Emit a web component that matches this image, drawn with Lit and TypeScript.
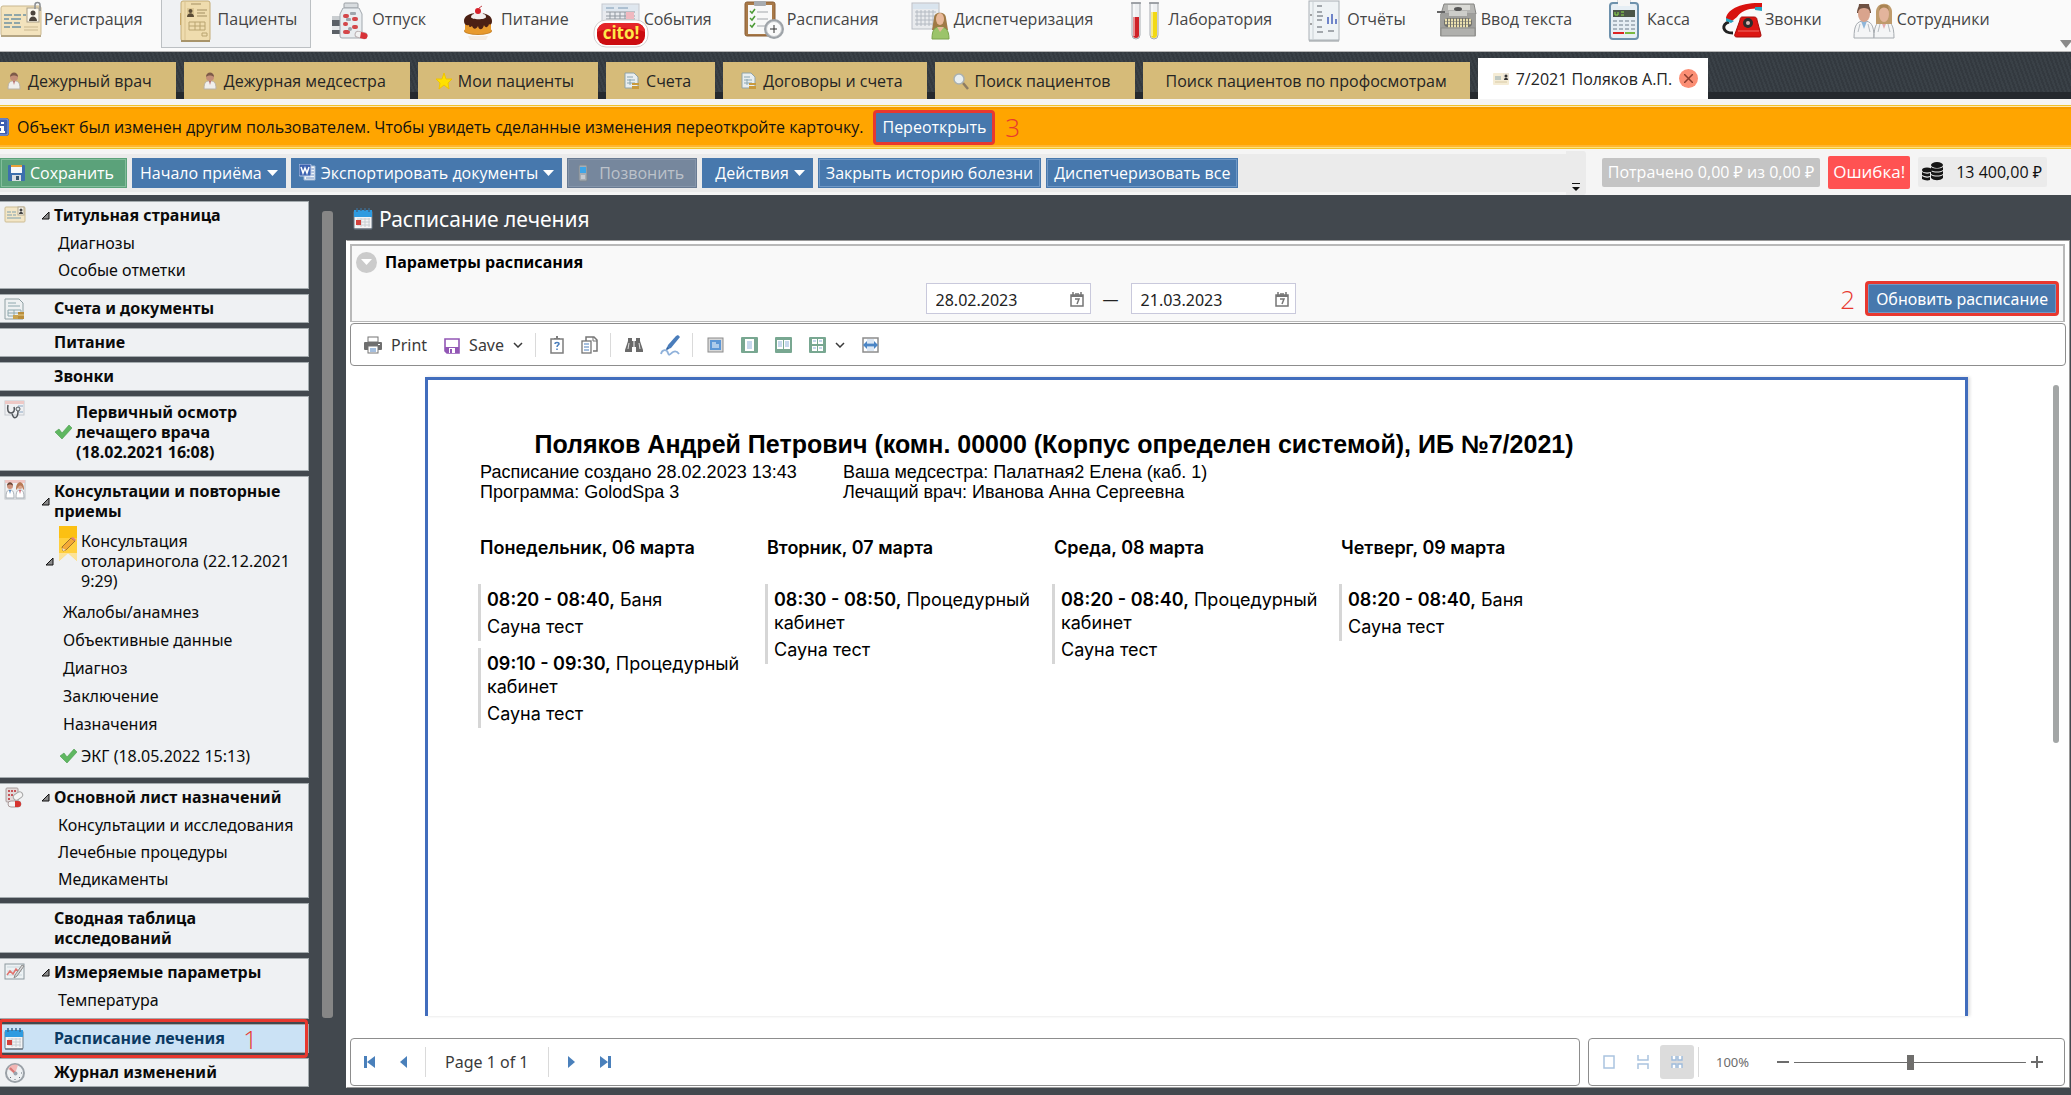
import { LitElement, html, css, svg, nothing, TemplateResult } from "lit";
import { customElement, state } from "lit/decorators.js";
import { classMap } from "lit/directives/class-map.js";

type Glyph = { w: number; h: number; body: TemplateResult };
const glyph = (w: number, h: number, body: TemplateResult): Glyph => ({ w, h, body });

const ICONS: Record<string, Glyph> = {
  card: glyph(44, 44, svg`
    <rect x="2" y="6" width="40" height="30" rx="2" fill="#f3e3bd" stroke="#c9b78f"/>
    <rect x="2" y="35" width="40" height="2" fill="#b5a684"/>
    <g stroke="#6f93a3" stroke-width="1.5"><path d="M5 15h8m2 0h7m2 0h3M5 19h5m2 0h10M5 23h8m2 0h6M5 27h6m2 0h9"/></g>
    <path d="M25 27h14M25 30h14" stroke="#c9b78f"/>
    <rect x="28" y="8" width="12" height="14" fill="#fbf7ec" stroke="#a79d87"/>
    <circle cx="34" cy="13" r="2.5" fill="#4b443c"/><path d="M30 21c0-6 8-6 8 0z" fill="#4b443c"/>
    <path d="M36 9V5a2 2 0 0 1 5 0v6" fill="none" stroke="#8b8f93" stroke-width="1.5"/>`),
  folder: glyph(44, 44, svg`
    <rect x="7" y="13" width="4" height="12" fill="#c9a45c"/>
    <rect x="8" y="1" width="29" height="40" rx="2" fill="#efdcae" stroke="#c4ac76"/>
    <path d="M12 2v38" stroke="#d9c290"/>
    <rect x="14" y="8" width="7" height="9" fill="#dcc795"/><circle cx="17.500" cy="11" r="2" fill="#5b4c36"/><path d="M14 17c0-5 7-5 7 0z" fill="#5b4c36"/>
    <path d="M18 4h10M24 10h10M24 13h8M24 16h10" stroke="#a38f63"/>
    <path d="M16 22h16v8H16zM16 26h16M22 22v8M27 22v8M29 33h5v3h-5z" fill="none" stroke="#b9a471"/>
    <rect x="8" y="40" width="29" height="2" fill="#a8946a"/>`),
  pills: glyph(44, 44, svg`
    <path d="M5 16h8v18H5z" fill="#5b6066"/><path d="M5 16h8v4H5z" fill="#c9cdd0"/><path d="M5 26h8v4H5z" fill="#e6e8ea"/>
    <rect x="17" y="3" width="14" height="5" rx="1" fill="#d8dcdf" stroke="#9ba0a5"/>
    <path d="M16 8h16l3 6v22a2 2 0 0 1-2 2H15a2 2 0 0 1-2-2V14z" fill="#e9edf0" stroke="#a1a7ad"/>
    <g fill="#d4474a"><rect x="16" y="14" width="6" height="4" rx="2"/><rect x="25" y="17" width="6" height="4" rx="2"/><rect x="16" y="22" width="5" height="4" rx="2"/><rect x="25" y="25" width="6" height="4" rx="2"/><rect x="16" y="30" width="7" height="4" rx="2"/></g>
    <g fill="#9fa6ad"><rect x="23" y="12" width="6" height="3" rx="1"/><rect x="19" y="18" width="5" height="3" rx="1"/><rect x="21" y="27" width="4" height="4" rx="2"/></g>
    <rect x="28" y="32" width="12" height="6" rx="3" fill="#f2f2f2" stroke="#b9aeb0" transform="rotate(14 34 35)"/>
    <path d="M34 32l4 1a3 3 0 0 1-1 6l-4-1z" fill="#d83238"/>`),
  cake: glyph(44, 44, svg`
    <ellipse cx="22" cy="31" rx="14" ry="4" fill="#c98327"/>
    <path d="M9 22v9c2 4 24 4 26 0v-9z" fill="#e89a2c"/>
    <path d="M8 21c0-5 5-8 14-8s14 3 14 8c0 4-2 4-3 3-1 4-4 4-5 1-1 5-5 6-6 1-2 4-5 3-6 0-2 2-3 1-3-1-2 1-5 0-5-4z" fill="#4b2014"/>
    <path d="M15 17c0-2 2-3 3-3 0-3 3-3 4-5 1 2 5 2 5 5 2 0 3 1 3 3 0 3-15 3-15 0z" fill="#f3efee"/>
    <circle cx="22" cy="11" r="3" fill="#d8202a"/><path d="M23 8l3-2" stroke="#c2474d" fill="none"/>
    <path d="M12 36h20l-2 4H14z" fill="#f4ece2"/>`),
  cito: glyph(56, 48, svg`
    <rect x="9" y="4" width="37" height="32" fill="#e8eaee" stroke="#c2c7cf"/>
    <rect x="10" y="5" width="35" height="6" fill="#dfe7ef"/><path d="M13 8h8m4 0h10" stroke="#7d9ab4"/>
    <path d="M13 12h29M13 16h29M13 19h29M17 12v7M22 12v7M27 12v7M32 12v7M37 12v7" stroke="#8f979f" fill="none"/>
    <rect x="33" y="12" width="8" height="7" fill="#f0b8bf"/>
    <rect x="1" y="20" width="54" height="27" rx="12" fill="#fff" stroke="#d3cfcf"/>
    <rect x="4" y="23" width="48" height="22" rx="9" fill="#cc0c10"/>
    <path d="M13 23h30a9 9 0 0 1 9 9c-12-5-36-5-48 0a9 9 0 0 1 9-9z" fill="#e5262a"/>
    <text x="28" y="39" text-anchor="middle" font-family="Open Sans, sans-serif" font-weight="700" font-size="17" fill="#ffe84a">cito!</text>`),
  clipboard: glyph(44, 44, svg`
    <rect x="3" y="2" width="30" height="34" rx="2" fill="#a87948" stroke="#8a5f34"/>
    <rect x="6" y="5" width="24" height="29" fill="#f8f8f8"/>
    <rect x="12" y="1" width="12" height="5" rx="1" fill="#a7abb0"/>
    <path d="M8 11l2 2 3-4M8 18l2 2 3-4M8 25l2 2 3-4" fill="none" stroke="#4b9a35" stroke-width="1.500"/>
    <path d="M15 12h11M15 19h11M15 26h8" stroke="#a2a6aa"/>
    <circle cx="32" cy="29" r="10" fill="#9ea3a8"/><circle cx="32" cy="29" r="7.500" fill="#fafafa" stroke="#c6c9cc"/>
    <path d="M32 25v4h3M32 29h-4M32 29v4" stroke="#333" fill="none"/>`),
  dispatch: glyph(44, 44, svg`
    <rect x="3" y="3" width="27" height="26" fill="#e9ebee" stroke="#b9bec5"/>
    <rect x="4" y="4" width="25" height="5" fill="#d9e4ee"/>
    <path d="M6 12h21M6 16h21M6 20h21M6 24h21M8 10v16M12 10v16M16 10v16M20 10v16M24 10v16" stroke="#b4bac2" fill="none"/>
    <path d="M25 18c0-7 12-7 12 0l2 12H23z" fill="#a07a46"/>
    <ellipse cx="31" cy="19" rx="4" ry="6" fill="#e8b99a"/>
    <path d="M23 39c0-10 3-12 8-12s9 2 9 12z" fill="#9bc46a" stroke="#7aa34c"/>
    <path d="M28 27l3 5 4-5z" fill="#e8b99a"/>`),
  lab: glyph(44, 44, svg`
    <path d="M9 3h8v32a4 4 0 0 1-8 0z" fill="#eef0f2" stroke="#a6abb0"/><path d="M10 17h6v18a3 3 0 0 1-6 0z" fill="#cf2228"/><path d="M11 4v32" stroke="#fff"/>
    <path d="M27 3h8v32a4 4 0 0 1-8 0z" fill="#eef0f2" stroke="#a6abb0"/><path d="M28 12h6v23a3 3 0 0 1-6 0z" fill="#f2d915"/><path d="M29 4v32" stroke="#fff"/>
    <path d="M8 3h10M26 3h10" stroke="#8e9398" stroke-width="1.500"/>`),
  report: glyph(44, 44, svg`
    <rect x="7" y="1" width="30" height="39" fill="#eff3f5" stroke="#a9b0b5"/><path d="M11 1v39" stroke="#c9d0d4"/>
    <path d="M15 6h5M15 12h5M15 16h6M15 20h5M15 27h5M15 32h6M26 31h6" stroke="#8a9095" stroke-width="1.500"/>
    <path d="M26 24v-7M30 24V14M34 24v-5" stroke="#6f84c9" stroke-width="2"/>
    <path d="M7 41h30" stroke="#8e959a"/>
    <circle cx="9" cy="15" r="1" fill="#888"/><circle cx="9" cy="24" r="1" fill="#888"/>`),
  typewriter: glyph(44, 44, svg`
    <path d="M8 4h30l2 10H5z" fill="#b4b4b1" stroke="#858582"/><rect x="12" y="5" width="22" height="5" fill="#dadad6"/>
    <path d="M1 12h8" stroke="#666" stroke-width="2"/><ellipse cx="22" cy="9" rx="4" ry="2" fill="#555"/>
    <path d="M4 14h36v22H4z" fill="#9f9f9c"/><rect x="5" y="28" width="34" height="8" fill="#b0b0ad" stroke="#8b8b88"/>
    <rect x="8" y="18" width="28" height="9" rx="4" fill="#6f6f6b"/><path d="M9 20h26M9 23h26M12 26h20" stroke="#eadfae" stroke-width="2.500" stroke-dasharray="2 1"/>
    <path d="M13 11h18v5H13z" fill="#cdcdc9"/>`),
  cash: glyph(44, 44, svg`
    <rect x="16" y="0" width="12" height="8" fill="#f0f0f0" stroke="#b7bbbf"/>
    <rect x="8" y="3" width="28" height="36" rx="3" fill="#e6eef4" stroke="#6d91ac" stroke-width="2"/>
    <rect x="16" y="0" width="12" height="6" fill="#f6f6f6"/>
    <rect x="11" y="10" width="22" height="7" fill="#4b5648"/><path d="M13 12v3h3v-3M19 12h3M19 15h3" stroke="#8fe04a" fill="none"/>
    <g fill="#a9b5bf"><path d="M11 20h4v2h-4zM17 20h4v2h-4zM23 20h4v2h-4zM29 20h4v2h-4zM11 24h4v2h-4zM17 24h4v2h-4zM23 24h4v2h-4zM29 24h4v2h-4zM11 28h4v2h-4zM17 28h4v2h-4zM23 28h4v2h-4zM29 28h4v2h-4z"/></g>
    <path d="M11 33h11" stroke="#d22" stroke-width="2"/><path d="M23 33h10" stroke="#79b83f" stroke-width="2"/>`),
  phone: glyph(44, 44, svg`
    <path d="M9 22c-8 2-7 11 4 11" fill="none" stroke="#222" stroke-width="3"/>
    <path d="M6 19c0-9 15-17 36-16v6c-10-2-21 1-25 8l-5 4z" fill="#d8120f"/>
    <path d="M35 7h7v4l-7-1z" fill="#28a3c0"/><path d="M6 18l8 3-3 2-5-2z" fill="#28a3c0"/>
    <path d="M22 17h12c2 0 3 1 3 3l4 15c0 2-1 2-2 2H17c-2 0-3-1-2-3l5-14c0-2 1-3 2-3z" fill="#dc1713" stroke="#a80d0a"/>
    <circle cx="28" cy="23" r="5" fill="#2c2c2c"/><circle cx="28" cy="23" r="2" fill="#d8b8b4"/>
    <path d="M18 31h21" stroke="#f0716a"/>`),
  staff: glyph(44, 44, svg`
    <path d="M2 38c0-13 3-17 10-17s10 4 10 17z" fill="#f4f5f6" stroke="#a6abb0"/>
    <path d="M22 38c0-13 3-17 10-17s10 4 10 17z" fill="#f4f5f6" stroke="#a6abb0"/>
    <path d="M9 21l3 8 3-8z" fill="#8fb6d9"/><path d="M29 21l3 8 3-8z" fill="#e3a9ae"/>
    <path d="M8 24l-2 8m10-8l2 8M28 24l-2 8m10-8l2 8" stroke="#b7bcc1" fill="none"/>
    <path d="M5 13c0-12 14-12 14 0z" fill="#6d4b39"/><ellipse cx="12" cy="14" rx="6" ry="8" fill="#d9a48d"/>
    <path d="M24 24V12c0-11 16-11 16 0v12z" fill="#bf9b6c"/><ellipse cx="32" cy="14" rx="5" ry="8" fill="#e3b49c"/>
    <path d="M6 11c2-4 10-4 12 0l-1-7H7z" fill="#6d5042"/><path d="M27 11c2-4 7-5 10 0l-1-6h-8z" fill="#a98353"/>`),
  doctor: glyph(16, 18, svg`
    <path d="M2 17c0-7 2-8 6-8s6 1 6 8z" fill="#f0efec" stroke="#b9b2a6"/><circle cx="8" cy="5" r="4" fill="#c48f78"/>
    <path d="M4 5c0-6 8-6 8 0-2-2-6-2-8 0z" fill="#7d5a48"/><path d="M7 9l1 4 1-4z" fill="#b8686a"/>`),
  star: glyph(16, 18, svg`<path d="M8 1l2 6 6 0-4 4 1 6-5-4-5 4 1-6-4-4h6z" fill="#ffe100" stroke="#f0c400"/>`),
  bill: glyph(16, 18, svg`
    <path d="M1 1h9l4 4v11H1z" fill="#e9eef0" stroke="#8fa3a8"/><path d="M3 5h6M3 8h8M3 11h8M6 7v6" stroke="#8aa6b0"/>
    <g fill="#c99a3c"><rect x="8" y="11" width="7" height="2"/><rect x="8" y="14" width="7" height="3"/></g>`),
  search: glyph(16, 18, svg`
    <path d="M10 11l5 6" stroke="#8d7c62" stroke-width="2.500"/><circle cx="6" cy="7" r="5" fill="#e9eff1" stroke="#a9b1b2" stroke-width="1.500"/>`),
  idcard: glyph(16, 18, svg`
    <rect x="0" y="3" width="16" height="12" rx="1" fill="#f5ecd5"/><rect x="10" y="3" width="6" height="7" fill="#ebe4d6"/>
    <path d="M2 7h6M2 9h6" stroke="#8aa6b0"/><circle cx="13" cy="6" r="1.500" fill="#333"/><path d="M11 10c0-3 4-3 4 0z" fill="#333"/><path d="M2 12h12" stroke="#d8caa5"/>`),
  info: glyph(18, 18, svg`
    <rect x="0" y="0" width="18" height="18" rx="3" fill="#3f5fb0"/><rect x="1" y="1" width="16" height="16" rx="2" fill="none" stroke="#8aa0d8"/>
    <rect x="10" y="4" width="3" height="2" fill="#fff"/><path d="M9 8h4v5h1v2H9v-2h1v-3H9z" fill="#fff"/>`),
  disk: glyph(17, 18, svg`
    <rect x="0" y="1" width="17" height="16" rx="1" fill="#3d6fae"/><rect x="3" y="1" width="11" height="8" fill="#f7f9fb"/><rect x="3" y="1" width="11" height="2" fill="#e8a13a"/>
    <rect x="4" y="11" width="9" height="6" fill="#d8dde2"/><rect x="8" y="12" width="3" height="4" fill="#36546f"/>`),
  word: glyph(17, 18, svg`
    <path d="M5 2h11v14H5z" fill="#f2f6fb" stroke="#9db4d3"/><path d="M12 5h3M12 8h3M12 11h3M7 14h8" stroke="#6a8cc0"/>
    <rect x="0" y="0" width="12" height="12" rx="1" fill="#3e63b1" stroke="#b9cbe6"/><path d="M2 3l2 6 2-5 2 5 2-6" fill="none" stroke="#fff" stroke-width="1.500"/>`),
  mobile: glyph(10, 18, svg`
    <rect x="1" y="1" width="8" height="16" rx="1" fill="#a6adb4" stroke="#7f8890"/><rect x="2" y="3" width="6" height="6" fill="#3fa5e6"/><path d="M3 12h4M3 14h4" stroke="#e6e9ec"/>`),
  coins: glyph(22, 20, svg`
    <g fill="#151515"><ellipse cx="15" cy="3" rx="6" ry="3"/><path d="M9 5c3 2 9 2 12 0v3c-3 2-9 2-12 0zM9 9c3 2 9 2 12 0v3c-3 2-9 2-12 0zM9 13c3 2 9 2 12 0v3c-3 3-9 3-12 0z"/>
    <ellipse cx="5" cy="8" rx="5" ry="2.500"/><path d="M0 10c3 2 6 2 8 1v3c-3 1-6 0-8-1zM0 14c3 2 6 2 8 1v3c-3 1-6 0-8-1z"/></g>`),
  sideCard: glyph(22, 20, svg`
    <rect x="1" y="2" width="20" height="15" rx="1" fill="#f3e6c6" stroke="#cdbd94"/><path d="M3 7h4m1 0h4M3 10h5m1 0h3M3 13h14" stroke="#7fa0ae"/>
    <rect x="14" y="2" width="6" height="8" fill="#faf6ea" stroke="#b3aa93"/><circle cx="17" cy="5" r="1.500" fill="#444"/><path d="M15 9c0-3 4-3 4 0z" fill="#444"/>`),
  sideBill: glyph(22, 22, svg`
    <path d="M1 1h14l4 4v16H1z" fill="#eef1f2" stroke="#8fa0a3"/><path d="M4 5h8M4 8h12M4 12h13v6H4zM4 15h13M10 12v6" fill="none" stroke="#8ea8ae"/>
    <rect x="9" y="17" width="5" height="4" fill="#c9a24e"/><rect x="14" y="14" width="6" height="7" fill="#b98d3b"/><path d="M14 17h6" stroke="#e6cf8d"/>`),
  sideExam: glyph(22, 20, svg`
    <rect x="1" y="1" width="19" height="14" fill="#f0f1f3" stroke="#c6cacf"/><rect x="1" y="1" width="19" height="3" fill="#eec9c6"/><path d="M14 6h5M15 12h4" stroke="#8ca8c4"/>
    <path d="M4 5c-1 5 0 8 3 8s4-3 3-6M8 13c1 7 6 6 6-2" fill="none" stroke="#51565b" stroke-width="1.500"/><circle cx="14" cy="9" r="2" fill="#dfe5ea" stroke="#51565b"/>`),
  sideStaff: glyph(22, 20, svg`
    <rect x="1" y="0" width="20" height="19" fill="#eff1f3" stroke="#bfc3c8"/><rect x="1" y="0" width="20" height="3" fill="#efc6c3"/>
    <path d="M2 18c0-6 1-8 4-8s4 2 4 8zM12 18c0-6 1-8 4-8s4 2 4 8z" fill="#fff" stroke="#aab0b6"/>
    <circle cx="6" cy="6" r="3" fill="#cf937c"/><path d="M3 6c0-5 6-5 6 0-1-2-5-2-6 0z" fill="#6a4738"/>
    <circle cx="16" cy="6" r="3" fill="#dba58c"/><path d="M12 9c0-9 8-9 8 0l-1 1c0-6-5-6-6 0z" fill="#b77a55"/>
    <path d="M5 10l1 4 1-4z" fill="#4d83bd"/><path d="M15 10l1 4 1-4z" fill="#d06068"/>`),
  sidePills: glyph(22, 22, svg`
    <rect x="2" y="1" width="12" height="14" rx="1" fill="#e3d9d9" stroke="#a89c9c"/><g fill="#c8555a"><path d="M4 3h2v2H4zM7 3h2v2H7zM10 3h2v2h-2zM4 7h2v2H4zM7 7h2v2H7zM4 11h2v2H4z"/></g>
    <rect x="9" y="6" width="10" height="6" rx="3" fill="#f4f4f4" stroke="#a5a5a5" transform="rotate(-35 14 9)"/>
    <rect x="4" y="14" width="13" height="6" rx="3" fill="#f4f4f4" stroke="#a99"/><path d="M11 14h3a3 3 0 0 1 0 6h-3z" fill="#d6342f"/>`),
  sideChart: glyph(22, 20, svg`
    <rect x="1" y="2" width="19" height="15" fill="#edf2f4" stroke="#8d9aa0"/><path d="M3 5h15M3 9h15M3 13h15" stroke="#cbd8de"/>
    <path d="M3 13l3-4 3 3 3-5 3 3 3-5" fill="none" stroke="#e0746f" stroke-width="1.500"/><path d="M20 4l-7 10-3 2 1-3 7-10z" fill="#d9d9d9" stroke="#8d8d8d"/>`),
  calendar: glyph(20, 22, svg`
    <rect x="1" y="3" width="18" height="18" rx="1" fill="#f3f4f5" stroke="#6f7d88"/><rect x="1" y="2" width="18" height="7" fill="#2e9be0"/>
    <path d="M4 0v4M16 0v4M8 0v3M12 0v3" stroke="#3c6a8e" stroke-width="1.500"/><path d="M4 11h13M4 14h13M4 17h13M8 10v9M12 10v9M16 10v9" stroke="#c9ced2"/>
    <rect x="3" y="12" width="5" height="5" fill="#d3413c"/><path d="M1 21h18" stroke="#59636c"/>`),
  gauge: glyph(22, 22, svg`
    <circle cx="11" cy="11" r="9" fill="#eef1f3" stroke="#9aa1a7" stroke-width="2"/><path d="M11 12L4 7a8 8 0 0 1 10-4z" fill="#f1b6b4"/>
    <path d="M6 6l6 6" stroke="#d77572" stroke-width="2"/><path d="M11 17v1M17 11h1M15 15l1 1M6 16l1-1" stroke="#657078"/><circle cx="11.500" cy="11.500" r="2" fill="#9aa4ad"/>`),
  check: glyph(18, 16, svg`<path d="M1 8l4-3 3 4 7-8 3 3L8 15z" fill="#5fb760" stroke="#489a4c" stroke-width=".6"/>`),
  bookmark: glyph(18, 38, svg`
    <path d="M0 1h18v35l-9-8-9 8z" fill="#ffcf3e"/><path d="M0 1h18v12H0z" fill="#fbb900" opacity=".7"/><path d="M0 28l0 8 9-8 9 8v-8z" fill="#fbe7ae" opacity=".8"/>
    <path d="M4 26l-1-4 9-9 4 3-9 9z" fill="#f4a937" stroke="#86602a" stroke-width=".8"/><path d="M12 13l2-1 3 3-1 1z" fill="#e37f7f"/><path d="M3 23l1 3 3-1z" fill="#f7e3c1"/>`),
  tri: glyph(9, 9, svg`<path d="M8 1v7H1z" fill="#8a8a8a" stroke="#111"/>`),
  caret: glyph(11, 6, svg`<path d="M0 0h11L5.500 6z" fill="#fff"/>`),
  chevron: glyph(10, 6, svg`<path d="M1 1l4 4 4-4" fill="none" stroke="#3a3a3a" stroke-width="1.500"/>`),
  printer: glyph(18, 18, svg`
    <rect x="4" y="1" width="10" height="5" fill="#fff" stroke="#757575"/><rect x="0" y="6" width="18" height="8" rx="1" fill="#6f6f6f"/>
    <rect x="4" y="10" width="10" height="7" fill="#fff" stroke="#757575"/><path d="M6 13h6M6 15h6" stroke="#4b7fbd"/><rect x="14" y="8" width="2" height="1" fill="#fff"/>`),
  floppy: glyph(16, 18, svg`
    <path d="M1 3h14v14H3l-2-2z" fill="#fff" stroke="#9257b5" stroke-width="1.600"/><path d="M1 11h14v6H3l-2-2z" fill="#9257b5"/><rect x="5" y="12" width="6" height="5" fill="#fff"/><rect x="6" y="13" width="2" height="4" fill="#9257b5"/>`),
  help: glyph(14, 18, svg`
    <rect x="1" y="3" width="12" height="14" fill="#fff" stroke="#7d7d7d" stroke-width="1.500"/><path d="M4 3h6v-1h-2V0H6v2H4z" fill="#7d7d7d"/><path d="M5 8c0-2 4-2 4 0 0 1-2 1-2 3M7 12.500v1.500" fill="none" stroke="#4b7fbd" stroke-width="1.500"/>`),
  copy: glyph(17, 18, svg`
    <path d="M5 5V1h8l3 3v11h-4" fill="none" stroke="#757575" stroke-width="1.500"/><rect x="1" y="5" width="9" height="12" fill="#fff" stroke="#757575" stroke-width="1.300"/><path d="M3 8h5M3 11h5M3 14h5" stroke="#4b7fbd"/><path d="M12 1v4h4" fill="none" stroke="#757575"/>`),
  binoculars: glyph(18, 18, svg`
    <path d="M3 2h4v3h4V2h4v3l3 9v2h-7v-5H7v5H0v-2l3-9z" fill="#6a6a6a"/><path d="M4 7l-1 6M14 7l1 6" stroke="#fff" stroke-width=".8"/><path d="M9 5v6" stroke="#fff"/>`),
  pen: glyph(20, 22, svg`
    <path d="M18 1l2 2-9 11-5 2 2-5 8-9z" fill="#4a7dbb"/><path d="M6 16l1-3 2 2z" fill="#2f5f9b"/><path d="M1 20c1-5 6-5 7-1s3 0 5-1 4-1 6 2" fill="none" stroke="#8fb1da" stroke-width="1.800"/>`),
  picture: glyph(17, 18, svg`
    <rect x="1" y="2" width="15" height="14" fill="#d8d8d8" stroke="#8c8c8c"/><rect x="3" y="4" width="11" height="10" fill="#5d97d6"/><path d="M5 7h4M5 9h7M5 11h7" stroke="#fff"/>`),
  onePage: glyph(17, 18, svg`
    <rect x="0" y="1" width="17" height="16" rx="1" fill="#78a791"/><rect x="4" y="3" width="9" height="12" fill="#fff"/><path d="M6 6h5M6 8h5M6 10h5M6 12h5" stroke="#8fb1da"/>`),
  twoPages: glyph(17, 18, svg`
    <rect x="0" y="1" width="17" height="16" rx="1" fill="#78a791"/><path d="M2 4h6v9H2zM9 4h6v9H9z" fill="#fff"/><path d="M3 6h4M3 8h4M3 10h4M10 6h4M10 8h4M10 10h4" stroke="#8fb1da"/>`),
  fourPages: glyph(17, 18, svg`
    <rect x="0" y="1" width="17" height="16" rx="1" fill="#78a791"/><path d="M3 3h5v5H3zM9 3h5v5H9zM3 10h5v5H3zM9 10h5v5H9z" fill="#fff"/><path d="M4 5h3M10 5h3M4 12h3M10 12h3" stroke="#8fb1da"/>`),
  fitWidth: glyph(17, 18, svg`
    <rect x="1" y="2" width="15" height="14" fill="#fff" stroke="#8c8c8c" stroke-width="1.500"/><path d="M5 4h7M5 6h7M5 12h7M5 14h7" stroke="#b9cfe8"/><path d="M1 9l4-4v2.500h7V5l4 4-4 4v-2.500H5V13z" fill="#4b85c5"/>`),
  dateIcon: glyph(14, 16, svg`
    <rect x="1" y="4" width="12" height="11" fill="#fff" stroke="#767676" stroke-width="1.500"/><path d="M1 4h12v2H1z" fill="#767676"/><path d="M3 1v4M11 1v4M6 2v2M8 2v2" stroke="#767676" stroke-width="1.500"/><path d="M5 8h4l-2 5" fill="none" stroke="#767676" stroke-width="1.500"/>`),
  first: glyph(11, 14, svg`<path d="M0 1h3v12H0zM11 1v12L3 7z" fill="#4a80bb"/>`),
  prev: glyph(8, 14, svg`<path d="M7 1v12L0 7z" fill="#4a80bb"/>`),
  next: glyph(8, 14, svg`<path d="M1 1v12l7-6z" fill="#4a80bb"/>`),
  last: glyph(11, 14, svg`<path d="M8 1h3v12H8zM0 1v12l8-6z" fill="#4a80bb"/>`),
  single: glyph(12, 16, svg`<rect x="1" y="2" width="10" height="12" fill="#fff" stroke="#aac4e0" stroke-width="1.500"/>`),
  continuous: glyph(12, 16, svg`<path d="M1 1v5h10V1M1 15v-5h10v5" fill="none" stroke="#aac4e0" stroke-width="1.500"/>`),
  grid: glyph(12, 16, svg`<path d="M1 2v4h4V2M7 2v4h4V2M1 14v-4h4v4M7 14v-4h4v4" fill="#fff" stroke="#9dbbdc" stroke-width="1.400"/>`),
  minus: glyph(12, 12, svg`<path d="M0 6h12" stroke="#6c6c6c" stroke-width="2"/>`),
  plus: glyph(12, 12, svg`<path d="M0 6h12M6 0v12" stroke="#6c6c6c" stroke-width="2"/>`),
};

const icon = (name: string) => {
  const g = ICONS[name];
  return html`<svg class="icon" width=${g.w} height=${g.h} viewBox="0 0 ${g.w} ${g.h}" aria-hidden="true">${g.body}</svg>`;
};

const MENU: [string, string][] = [
  ["card", "Регистрация"], ["folder", "Пациенты"], ["pills", "Отпуск"], ["cake", "Питание"], ["cito", "События"],
  ["clipboard", "Расписания"], ["dispatch", "Диспетчеризация"], ["lab", "Лаборатория"], ["report", "Отчёты"],
  ["typewriter", "Ввод текста"], ["cash", "Касса"], ["phone", "Звонки"], ["staff", "Сотрудники"],
];

const TABS: [string, string][] = [
  ["doctor", "Дежурный врач"], ["doctor", "Дежурная медсестра"], ["star", "Мои пациенты"], ["bill", "Счета"],
  ["bill", "Договоры и счета"], ["search", "Поиск пациентов"], ["", "Поиск пациентов по профосмотрам"],
];

type Procedure = { time: string; place: string; name: string };
const DAYS: { title: string; events: Procedure[] }[] = [
  { title: "Понедельник, 06 марта", events: [
    { time: "08:20 - 08:40,", place: "Баня", name: "Сауна тест" },
    { time: "09:10 - 09:30,", place: "Процедурный кабинет", name: "Сауна тест" }] },
  { title: "Вторник, 07 марта", events: [{ time: "08:30 - 08:50,", place: "Процедурный кабинет", name: "Сауна тест" }] },
  { title: "Среда, 08 марта", events: [{ time: "08:20 - 08:40,", place: "Процедурный кабинет", name: "Сауна тест" }] },
  { title: "Четверг, 09 марта", events: [{ time: "08:20 - 08:40,", place: "Баня", name: "Сауна тест" }] },
];

const shared = css`
  * { box-sizing: border-box; }
  .icon { display: block; flex: none; }
  button { font: inherit; color: inherit; background: none; border: 0; padding: 0; margin: 0; display: flex; align-items: center; white-space: nowrap; }
  a { color: inherit; text-decoration: none; }
  .marker { color: #e8382f; font: 300 26px/26px "Open Sans", sans-serif; }
`;

@customElement("clinic-header")
class ClinicHeader extends LitElement {
  static styles = [shared, css`
    :host { display: block; font-family: "Open Sans", "Noto Sans", sans-serif; }
    .menu { display: flex; position: relative; height: 52px; margin-left: -13px; background: #fafafa; border-bottom: 1px solid #b5b5b5; }
    .item { display: flex; align-items: center; height: 48px; margin-right: 4px; padding: 0 13px 10px 10px; color: #454545; border: 1px solid transparent; border-top: 0; white-space: nowrap; }
    .item.current { background: #eff1f3; border-color: #bcc0c3; }
    .pic { display: flex; justify-content: center; align-items: flex-start; width: 46px; height: 38px; overflow: visible; }
    .more { position: absolute; right: 0; top: 40px; width: 11px; height: 8px; }
    .tabs { display: flex; align-items: flex-end; gap: 8px; height: 47px; padding-right: 8px; overflow: hidden;
      background: linear-gradient(transparent 40px, #25292e 40px), repeating-linear-gradient(70deg, #33393f 0 2px, #3a4147 2px 4px); }
    .tabs::before { content: ""; width: 0; margin-left: -20px; }
    .tab { display: flex; align-items: center; gap: 6px; height: 37px; padding: 0 24px 0 18px; background: #d6bb79; color: #242424; white-space: nowrap; }
    .tab.bare { padding: 0 23px; }
    .tab.active { height: 41px; padding: 0 10px 0 15px; background: #fff; gap: 7px; }
    .close { justify-content: center; width: 19px; height: 19px; border-radius: 50%; background: #fb8e74; }
  `];
  render() {
    return html`
      <nav class="menu" aria-label="Главное меню">
        ${MENU.map(([i, t]) => html`<a href="#" class=${classMap({ item: true, current: i === "folder" })}><span class="pic">${icon(i)}</span>${t}</a>`)}
        <button class="more" aria-label="Ещё"><svg class="icon" width="11" height="8"><path d="M0 0h11v2L6 8z" fill="#8a8a8a"/></svg></button>
      </nav>
      <nav class="tabs" aria-label="Вкладки">
        ${TABS.map(([i, t]) => html`<a href="#" class=${classMap({ tab: true, bare: !i })}>${i ? icon(i) : nothing}${t}</a>`)}
        <div class="tab active">${icon("idcard")}<a href="#">7/2021 Поляков А.П.</a>
          <button class="close" aria-label="Закрыть"><svg class="icon" width="9" height="9"><path d="M0 0l9 9M9 0L0 9" stroke="#8c3d2e" stroke-width="1.500"/></svg></button>
        </div>
      </nav>`;
  }
}

@customElement("clinic-actions")
class ClinicActions extends LitElement {
  static styles = [shared, css`
    :host { display: block; background: #f5f5f5; padding-top: 6px; font-family: "Open Sans", "Noto Sans", sans-serif; }
    .notice { display: flex; align-items: center; height: 44px; background: #ffa500; border: solid #f0c22c; border-width: 1px 0; box-shadow: inset 0 1px #ffe9b0, inset 0 -1px #ffe070, inset 0 3px #f59c00, inset 0 -3px #ffb52e; color: #111; }
    .notice .icon { margin: 0 8px 0 -9px; }
    .reopen { height: 35px; margin: 0 10px; padding: 0 6px; }
    .ring { border: 3px solid #e8382f; border-radius: 4px; background: #4778ad; color: #fff; }
    .row { display: flex; align-items: stretch; height: 46px; }
    .bar { flex: 1; display: flex; align-items: center; gap: 5px; margin: 5px 0 3px; background: #ebebeb; }
    .edge { display: flex; align-items: flex-end; justify-content: center; width: 20px; margin: 2px 16px 0 0; padding-bottom: 4px; background: #ebebeb; border-radius: 0 3px 3px 0; }
    .btn { gap: 5px; height: 30px; padding: 0 8px; background: #4778ad; color: #fff; }
    .flat { box-shadow: inset 0 0 0 1px #4778ad, inset 0 0 0 2px #6f98c6; }
    .save { padding: 0 13px 0 8px; background: #5ba27a; box-shadow: inset 0 0 0 1px #5ba27a, inset 0 0 0 2px #83bd9b; }
    .call { gap: 11px; padding: 0 13px 0 11px; background: #76879d; color: #bcc2ca; box-shadow: inset 0 0 0 1px #687a92, inset 0 0 0 2px #8595aa; }
    .more { padding-left: 13px; }
    .status { display: flex; align-items: center; gap: 8px; padding-right: 24px; white-space: nowrap; }
    .spent { height: 29px; padding: 0 6px; background: #c4c4c4; color: #fff; line-height: 28px; border-radius: 2px; }
    .error { height: 33px; padding: 0 5px; background: #ff5252; color: #fff; font-size: 17px; border-radius: 2px; }
    .money { display: flex; align-items: center; gap: 12px; height: 30px; padding: 0 5px 0 4px; background: #ebebeb; color: #111; border-radius: 2px; }
  `];
  render() {
    return html`
      <div class="notice">${icon("info")}Объект был изменен другим пользователем. Чтобы увидеть сделанные изменения переоткройте карточку.
        <button class="reopen ring">Переоткрыть</button><span class="marker">3</span></div>
      <div class="row">
        <div class="bar">
          <button class="btn save">${icon("disk")}Сохранить</button>
          <button class="btn">Начало приёма${icon("caret")}</button>
          <button class="btn">${icon("word")}Экспортировать документы${icon("caret")}</button>
          <button class="btn call" disabled>${icon("mobile")}Позвонить</button>
          <button class="btn more">Действия${icon("caret")}</button>
          <button class="btn flat">Закрыть историю болезни</button>
          <button class="btn flat">Диспетчеризовать все</button>
        </div>
        <button class="edge" aria-label="Дополнительно"><svg class="icon" width="8" height="8"><path d="M0 .500h8" stroke="#111"/><path d="M0 4h8L4 8z" fill="#111"/></svg></button>
        <div class="status">
          <span class="spent">Потрачено 0,00 ₽ из 0,00 ₽</span>
          <button class="error">Ошибка!</button>
          <span class="money">${icon("coins")}13 400,00 ₽</span>
        </div>
      </div>`;
  }
}

@customElement("clinic-sidebar")
class ClinicSidebar extends LitElement {
  static styles = [shared, css`
    :host { display: flex; align-items: stretch; gap: 13px; width: 346px; flex: none; color: #0a0a0a; }
    .list { width: 309px; display: flex; flex-direction: column; gap: 5px; padding: 6px 0 8px; }
    .panel { display: grid; grid-template-columns: 37px 17px 1fr; background: #eff1f3; border: 1px solid #a4abae; border-left: 0; }
    .pic { padding: 3px 0 0 4px; grid-row: 1 / span 9; height: 0; }
    .fold { align-self: center; padding: 0 4px; }
    .head { font-weight: 700; line-height: 27px; grid-column: 3; }
    .head.tall { line-height: 20px; padding: 4px 0; }
    .exam { display: flex; align-items: center; gap: 4px; padding: 5px 40px 8px 0; font-weight: 700; line-height: 20px; }
    .subs { grid-column: 3; display: flex; flex-direction: column; padding: 1px 0 4px 4px; line-height: 27px; }
    .visit { grid-column: 2 / span 2; display: grid; grid-template-columns: 22px 22px 1fr; align-items: center; line-height: 20px; padding: 6px 12px 7px 0; }
    .visit .fold { padding: 0 8px; }
    .mark { align-self: start; height: 38px; margin-top: -6px; }
    .visit .mark { height: 0; }
    .parts { grid-column: 3; display: flex; flex-direction: column; padding: 0 0 7px 9px; line-height: 28px; }
    .done { display: flex; align-items: center; gap: 4px; margin: 4px 0 0 -4px; }
    .on { position: relative; background: #cbe2f5; color: #0b3a63; }
    .frame { position: absolute; inset: -6px 0 -6px -1px; border: 3px solid #e8382f; border-radius: 4px; pointer-events: none; }
    .on .head { display: flex; align-items: center; gap: 18px; }
    .scroll { width: 11px; margin: 16px 0 77px; background: #868686; border-radius: 3px; }
  `];
  private fold() { return html`<button class="fold" aria-label="Свернуть">${icon("tri")}</button>`; }
  private plain(title: string, pic = "", tall = false) {
    return html`<section class="panel">${pic ? html`<span class="pic">${icon(pic)}</span>` : nothing}<a href="#" class=${classMap({ head: true, tall })}>${title}</a></section>`;
  }
  private group(title: string, pic: string, subs: string[]) {
    return html`<section class="panel"><span class="pic">${icon(pic)}</span>${this.fold()}<a href="#" class="head">${title}</a>
      <div class="subs">${subs.map((s) => html`<a href="#">${s}</a>`)}</div></section>`;
  }
  render() {
    return html`
      <nav class="list" aria-label="Разделы карты">
        ${this.group("Титульная страница", "sideCard", ["Диагнозы", "Особые отметки"])}
        ${this.plain("Счета и документы", "sideBill")}
        ${this.plain("Питание")}
        ${this.plain("Звонки")}
        <section class="panel"><span class="pic">${icon("sideExam")}</span><span></span>
          <a href="#" class="exam">${icon("check")}Первичный осмотр лечащего врача (18.02.2021 16:08)</a></section>
        <section class="panel"><span class="pic">${icon("sideStaff")}</span>${this.fold()}
          <a href="#" class="head tall">Консультации и повторные приемы</a>
          <div class="visit">${this.fold()}<span class="mark">${icon("bookmark")}</span><a href="#">Консультация отолариногола (22.12.2021 9:29)</a></div>
          <div class="parts">
            ${["Жалобы/анамнез", "Объективные данные", "Диагноз", "Заключение", "Назначения"].map((s) => html`<a href="#">${s}</a>`)}
            <a href="#" class="done">${icon("check")}ЭКГ (18.05.2022 15:13)</a>
          </div></section>
        ${this.group("Основной лист назначений", "sidePills", ["Консультации и исследования", "Лечебные процедуры", "Медикаменты"])}
        ${this.plain("Сводная таблица исследований", "", true)}
        ${this.group("Измеряемые параметры", "sideChart", ["Температура"])}
        <section class="panel on"><span class="pic">${icon("calendar")}</span>
          <a href="#" class="head" aria-current="page">Расписание лечения<span class="marker">1</span></a><span class="frame"></span></section>
        ${this.plain("Журнал изменений", "gauge")}
      </nav>
      <div class="scroll"></div>`;
  }
}

@customElement("clinic-schedule")
class ClinicSchedule extends LitElement {
  static styles = [shared, css`
    :host { flex: 1; display: flex; flex-direction: column; min-width: 0; padding: 0 1px 7px 0; }
    h1 { display: flex; align-items: center; gap: 6px; margin: 0; height: 45px; padding: 3px 0 0 7px; color: #fff; font-size: 21px; font-weight: 400; }
    .work { flex: 1; display: flex; flex-direction: column; padding: 3px 3px 1px; background: #fff; border: 1px solid #9a9a9a; border-left-color: #fff; }
    .params { display: flex; flex-direction: column; height: 78px; margin: 0 1px 1px 0; background: #f9f9f9; border: 2px solid #b9b9b9; border-bottom-width: 1px; padding: 4px 4px 0; }
    .caption { display: flex; align-items: center; gap: 8px; height: 24px; font-weight: 700; color: #000; }
    .toggle { justify-content: center; width: 21px; height: 21px; border-radius: 50%; background: #cbcbcb; }
    .line { display: flex; align-items: center; margin-top: 7px; }
    .dates { flex: 1; display: flex; justify-content: center; align-items: center; gap: 12px; color: #222; }
    .date { display: flex; align-items: center; width: 165px; height: 31px; padding: 0 6px 0 9px; background: #fff; border: 1px solid #c9c9dc; }
    .date input { flex: 1; width: 0; padding: 2px 0 0; border: 0; outline: 0; background: none; font: inherit; color: #222; }
    .refresh { position: relative; height: 35px; padding: 0 8px; border: 3px solid #e8382f; border-radius: 4px; background: #4778ad; color: #fff; box-shadow: inset 0 0 0 1px #6f98c6; }
    .refresh .marker { position: absolute; right: 100%; margin-right: 13px; }
    .tools { display: flex; align-items: center; height: 43px; padding: 0 13px; border: 1px solid #8d8d8d; border-radius: 4px; color: #3a3a3a; }
    .cluster { display: flex; align-items: center; gap: 17px; }
    .cluster + .cluster { margin-left: 12px; padding-left: 14px; border-left: 1px solid #dadada; height: 24px; }
    .tool { gap: 9px; }
    .view { flex: 1; display: flex; padding: 11px 7px 22px 75px; min-height: 0; }
    .sheet { flex: 1; margin-right: 85px; padding: 48px 52px 0; border: 3px solid #416dbd; border-bottom: 0; box-shadow: 2px 0 3px #ddd; color: #000; }
    .wrap { max-width: 1148px; }
    h2 { margin: 0 0 2px; text-align: center; font: 700 25px/32px "Liberation Sans", sans-serif; white-space: nowrap; }
    .meta { display: grid; grid-template-columns: 363px 1fr; font: 18px/20px "Liberation Sans", sans-serif; }
    .days { display: grid; grid-template-columns: repeat(4, 1fr); margin-top: 34px; font: 18px/23px Inter, sans-serif; }
    h3 { margin: 0 0 24px; font-size: 18px; line-height: 24px; font-weight: 600; }
    .event { margin: 0 0 7px -2px; padding: 4px 0 3px 6px; border-left: 3px solid #d6d6d6; }
    .event b { font-weight: 600; }
    .event p { margin: 0 0 4px; }
    .thumb { width: 6px; height: 358px; margin-top: 8px; border-radius: 3px; background: #a3a6a6; }
    .foot { display: flex; gap: 8px; }
    .pager, .zoom { display: flex; align-items: center; height: 48px; border: 1px solid #8d8d8d; border-radius: 4px; color: #3a3a3a; }
    .pager { flex: 1; padding: 0 13px; }
    .steps { display: flex; gap: 25px; }
    .page { margin: 0 18px 0 17px; padding: 0 19px; line-height: 30px; border: solid #dadada; border-width: 0 1px; }
    .zoom { width: 477px; padding: 0 21px 0 3px; margin-right: 1px; }
    .mode { justify-content: center; width: 34px; height: 34px; border-radius: 3px; }
    .mode.on { background: #dcdcdc; }
    .percent { margin-left: 4px; padding: 0 28px 0 17px; border-left: 1px solid #dadada; font-size: 13px; line-height: 30px; color: #6c6c6c; }
    .range { flex: 1; min-width: 0; height: 16px; margin: 0 5px; appearance: none; background: linear-gradient(#6c6c6c, #6c6c6c) center / 100% 1px no-repeat; }
    .range::-webkit-slider-thumb { appearance: none; width: 7px; height: 15px; background: #6f6e6c; }
  `];
  @state() private zoom = 50;
  private date(label: string, value: string) {
    return html`<label class="date"><input type="text" aria-label=${label} .value=${value}>${icon("dateIcon")}</label>`;
  }
  private tool(name: string, label: string) { return html`<button aria-label=${label}>${icon(name)}</button>`; }
  render() {
    return html`
      <h1>${icon("calendar")}Расписание лечения</h1>
      <div class="work">
        <section class="params">
          <div class="caption"><button class="toggle" aria-label="Свернуть">${icon("caret")}</button>Параметры расписания</div>
          <div class="line">
            <div class="dates">${this.date("Дата начала", "28.02.2023")}<span>—</span>${this.date("Дата окончания", "21.03.2023")}</div>
            <button class="refresh"><span class="marker">2</span>Обновить расписание</button>
          </div>
        </section>
        <div class="tools">
          <div class="cluster"><button class="tool">${icon("printer")}Print</button><button class="tool">${icon("floppy")}Save${icon("chevron")}</button></div>
          <div class="cluster">${this.tool("help", "Параметры")}${this.tool("copy", "Копировать")}</div>
          <div class="cluster">${this.tool("binoculars", "Найти")}${this.tool("pen", "Редактировать")}</div>
          <div class="cluster">${this.tool("picture", "Во весь экран")}${this.tool("onePage", "Одна страница")}${this.tool("twoPages", "Две страницы")}
            <button class="tool" aria-label="Несколько страниц">${icon("fourPages")}${icon("chevron")}</button>${this.tool("fitWidth", "По ширине")}</div>
        </div>
        <div class="view">
          <article class="sheet"><div class="wrap">
            <h2>Поляков Андрей Петрович (комн. 00000 (Корпус определен системой), ИБ №7/2021)</h2>
            <div class="meta"><span>Расписание создано 28.02.2023 13:43</span><span>Ваша медсестра: Палатная2 Елена (каб. 1)</span>
              <span>Программа: GolodSpa 3</span><span>Лечащий врач: Иванова Анна Сергеевна</span></div>
            <div class="days">${DAYS.map((d) => html`<section><h3>${d.title}</h3>
              ${d.events.map((e) => html`<div class="event"><p><b>${e.time}</b>${e.place.split(" ").map((word) => html` <span>${word}</span>`)}</p>${e.name}</div>`)}</section>`)}</div>
          </div></article>
          <div class="thumb"></div>
        </div>
        <div class="foot">
          <div class="pager">
            <div class="steps">${this.tool("first", "Первая")}${this.tool("prev", "Предыдущая")}</div>
            <span class="page">Page 1 of 1</span>
            <div class="steps">${this.tool("next", "Следующая")}${this.tool("last", "Последняя")}</div>
          </div>
          <div class="zoom">
            <button class="mode" aria-label="Страница">${icon("single")}</button>
            <button class="mode" aria-label="Лента">${icon("continuous")}</button>
            <button class="mode on" aria-label="Сетка">${icon("grid")}</button>
            <span class="percent">100%</span>
            ${this.tool("minus", "Уменьшить")}
            <input class="range" type="range" aria-label="Масштаб" min="0" max="100" .value=${String(this.zoom)} @input=${(e: InputEvent) => (this.zoom = +(e.target as HTMLInputElement).value)}>
            ${this.tool("plus", "Увеличить")}
          </div>
        </div>
      </div>`;
  }
}

@customElement("app-root")
class AppRoot extends LitElement {
  static styles = css`
    :host { display: flex; flex-direction: column; min-height: 100vh; overflow: hidden; background: #42484e; font: 16px/22px "Noto Sans", "Open Sans", sans-serif; }
    .body { flex: 1; display: flex; }
  `;
  render() {
    return html`<clinic-header></clinic-header><clinic-actions></clinic-actions>
      <div class="body"><clinic-sidebar></clinic-sidebar><clinic-schedule></clinic-schedule></div>`;
  }
}
